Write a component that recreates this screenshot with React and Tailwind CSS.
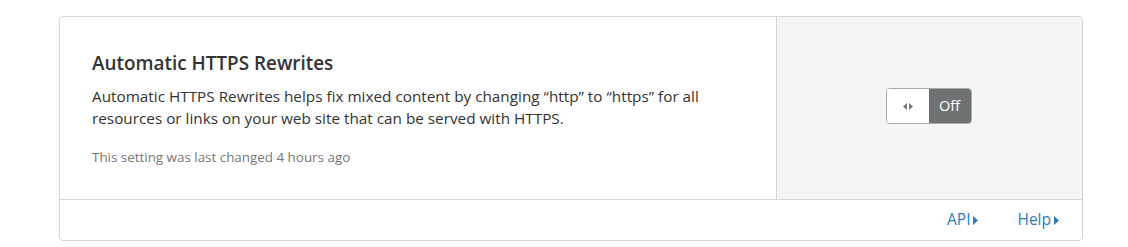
export default function App() {
  return (
    <div className="w-[1128px] h-[247px] bg-white pt-[16px] pl-[59px]" style={{ fontFamily: '"Open Sans", "Liberation Sans", sans-serif' }}>
      <div className="w-[1024px] border border-[#d5d5d5] rounded-[4px] overflow-hidden">
        <div className="flex border-b border-[#d5d5d5]">
          <div className="flex-1 pl-[32px] pr-[32px] pt-[34px] pb-[32px]">
            <h3 className="text-[18.9px] leading-[24px] font-semibold text-[#333]">Automatic HTTPS Rewrites</h3>
            <p className="mt-[10px] text-[15.3px] leading-[22px] text-[#333] w-[640px]">
              Automatic HTTPS Rewrites helps fix mixed content by changing “http” to “https” for all resources or links on your web site that can be served with HTTPS.
            </p>
            <p className="mt-[18px] text-[13.4px] leading-[20px] text-[#777]">This setting was last changed 4 hours ago</p>
          </div>
          <div className="w-[306px] bg-[#f5f5f5] border-l border-[#d5d5d5] flex items-center justify-center">
            <div className="flex h-[36px] w-[86px] rounded-[4px] border border-[#a9a9a9] overflow-hidden -mt-[4px] -ml-[2px]">
              <div className="w-[42px] bg-white flex items-center justify-center gap-[2px]">
                <svg width="4" height="7" viewBox="0 0 4 7"><path d="M4 0 L0 3.5 L4 7 Z" fill="#777" /></svg>
                <svg width="4" height="7" viewBox="0 0 4 7"><path d="M0 0 L4 3.5 L0 7 Z" fill="#777" /></svg>
              </div>
              <div className="flex-1 bg-[#6f7273] flex items-center justify-center text-white text-[14.5px]">Off</div>
            </div>
          </div>
        </div>
        <div className="h-[40px] flex items-center justify-end pr-[23px] gap-[39px] text-[15.5px] text-[#2f7bbf]">
          <span className="flex items-center gap-[3px]">API<svg width="5" height="9" viewBox="0 0 5 9"><path d="M0 0 L5 4.5 L0 9 Z" fill="#2f7bbf" /></svg></span>
          <span className="flex items-center gap-[3px]">Help<svg width="5" height="9" viewBox="0 0 5 9"><path d="M0 0 L5 4.5 L0 9 Z" fill="#2f7bbf" /></svg></span>
        </div>
      </div>
    </div>
  );
}
